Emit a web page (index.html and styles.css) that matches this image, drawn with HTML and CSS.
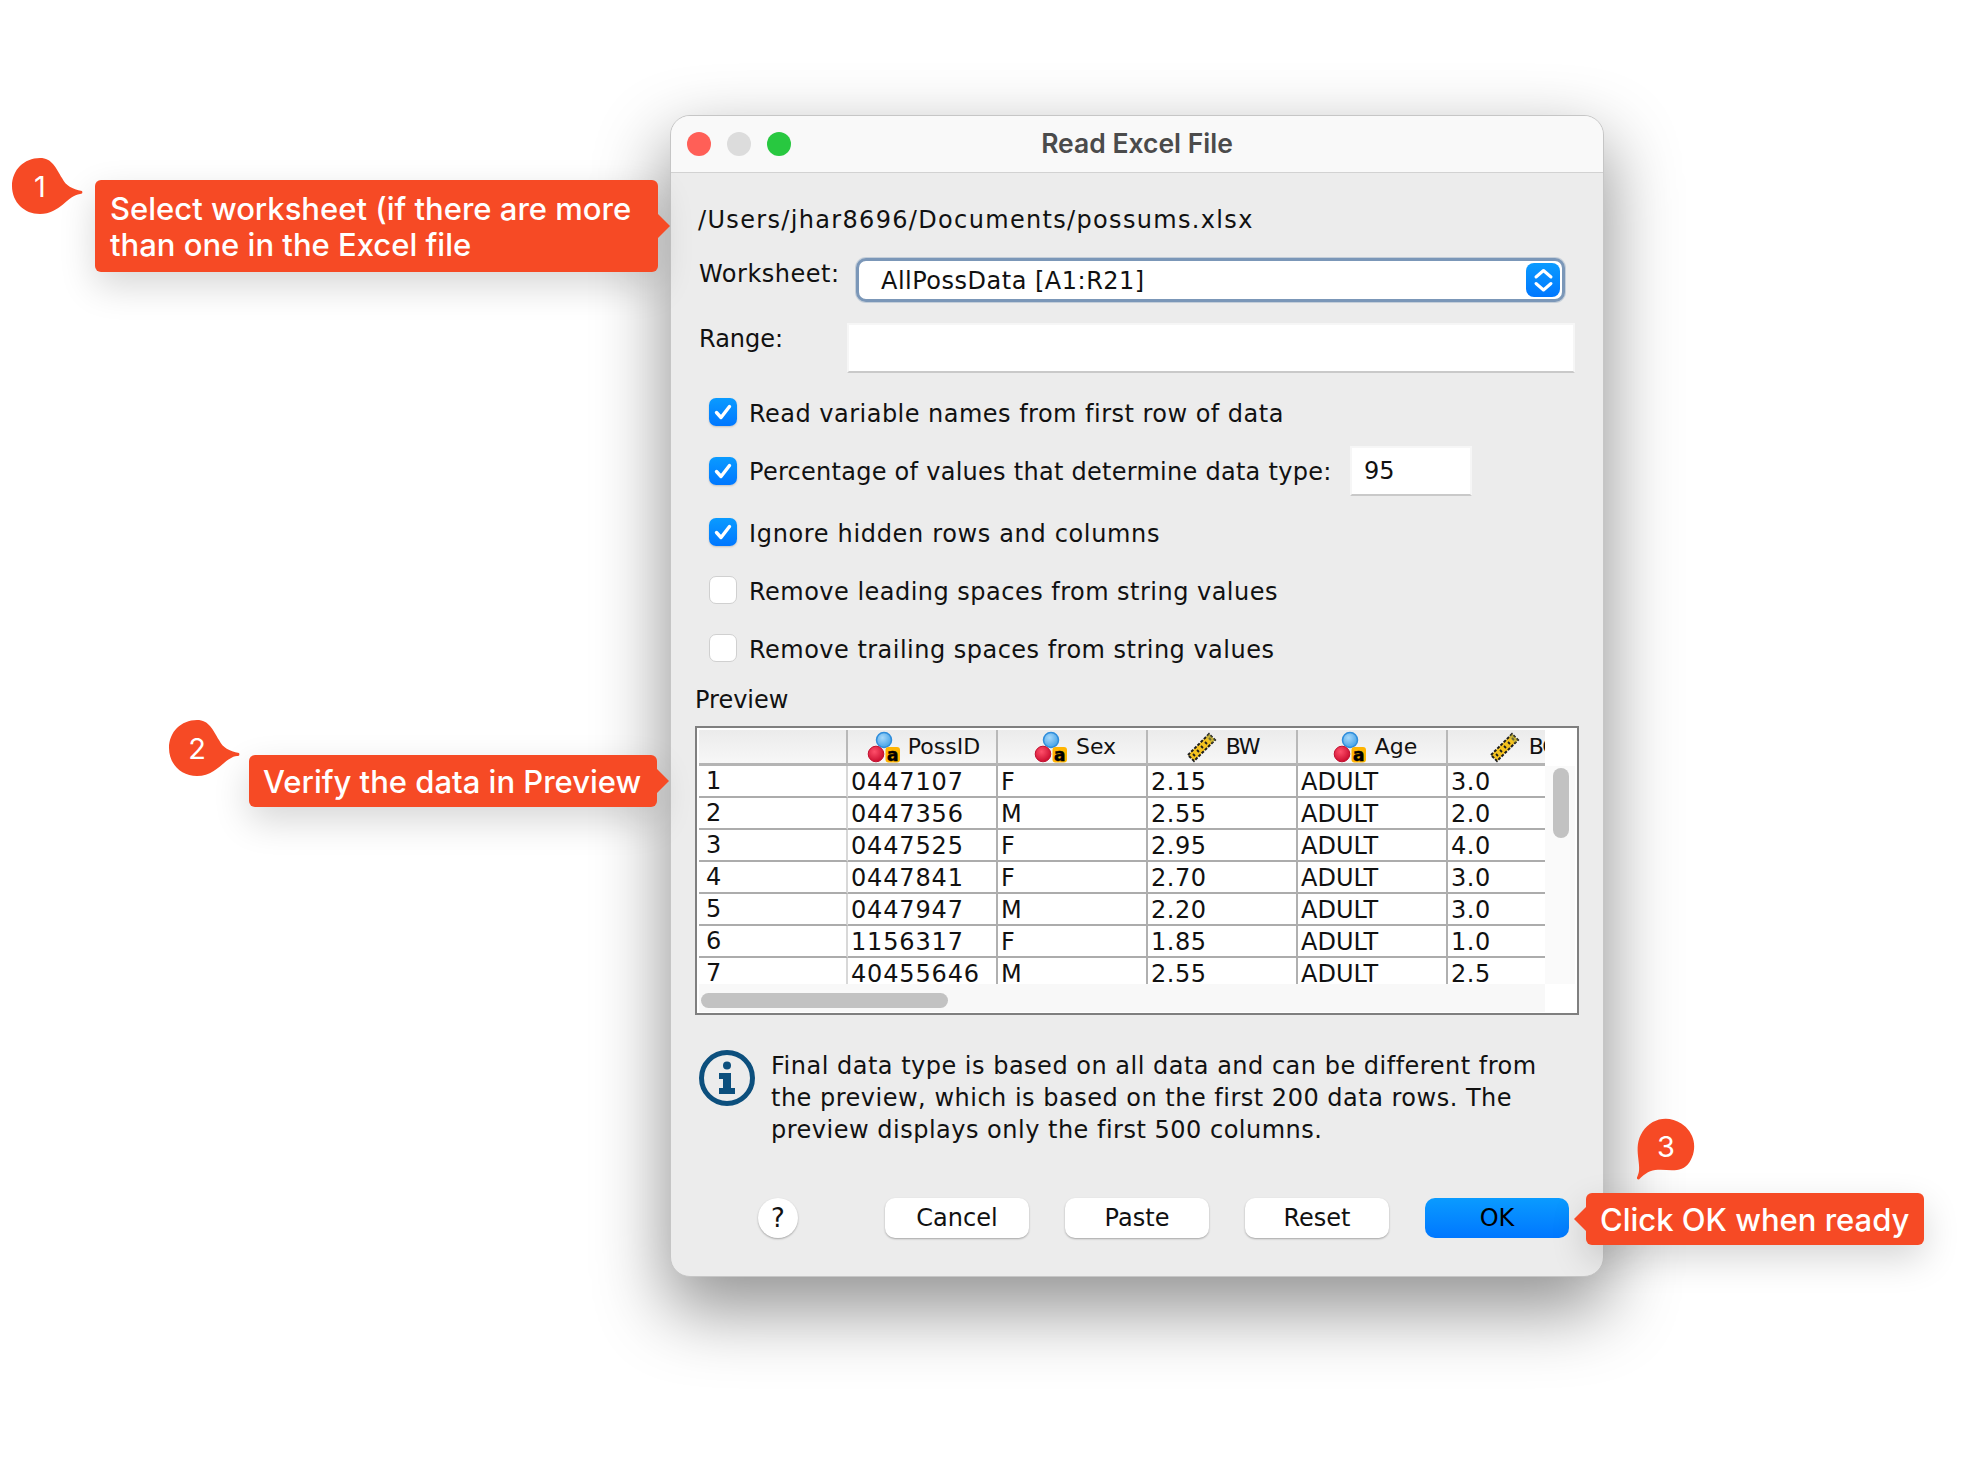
FILE: index.html
```html
<!DOCTYPE html>
<html lang="en">
<head>
<meta charset="utf-8">
<title>Read Excel File</title>
<link rel="stylesheet" href="styles.css">
</head>
<body>
<svg class="defs" width="0" height="0" aria-hidden="true">
  <defs>
    <radialGradient id="gBlue" cx="40%" cy="35%" r="70%"><stop offset="0" stop-color="#a6d8fa"/><stop offset="1" stop-color="#3f9fe6"/></radialGradient>
    <radialGradient id="gRed" cx="40%" cy="35%" r="70%"><stop offset="0" stop-color="#ff4f6a"/><stop offset="1" stop-color="#c80a2c"/></radialGradient>
    <symbol id="nominal" viewBox="0 0 40 36">
      <circle cx="23" cy="11" r="7.5" fill="url(#gBlue)" stroke="#2f8ddb" stroke-width="1.5"/>
      <circle cx="15" cy="25" r="7.8" fill="url(#gRed)" stroke="#c21030" stroke-width="1"/>
      <rect x="24.500" y="18" width="14.500" height="15.500" rx="3" fill="#ffb400"/>
      <text x="31.700" y="32" class="icon-a">a</text>
    </symbol>
    <symbol id="scale" viewBox="0 0 32 32">
      <path d="M3 24 24 3l6 6L9 30z" fill="#f4c21f" stroke="#1d1d1d" stroke-width="2" stroke-dasharray="3 1.500"/>
      <path d="M8 23l2 2M12 19l2 2M16 15l2 2M20 11l2 2M24 7l2 2" stroke="#1d1d1d" stroke-width="1.800" fill="none"/>
      <path d="M21 6l3-3 6 6-3 3z" fill="#a9a94a" opacity=".55"/>
    </symbol>
    <symbol id="tick" viewBox="0 0 28 28">
      <path d="M7.5 14.500l4.500 5 8.500-11" fill="none" stroke="#fff" stroke-width="3.400" stroke-linecap="round" stroke-linejoin="round"/>
    </symbol>
  </defs>
</svg>

<div class="stage">
  <section class="dialog">
    <header class="titlebar">
      <div class="lights"><span class="light light-red"></span><span class="light light-grey"></span><span class="light light-green"></span></div>
      <h1 class="title">Read Excel File</h1>
    </header>

    <div class="content">
      <div class="path">/Users/jhar8696/Documents/possums.xlsx</div>

      <div class="form-row sheet-row">
        <label class="form-label sheet-label">Worksheet:</label>
        <div class="combo">
          <span class="combo-text">AllPossData [A1:R21]</span>
          <span class="stepper">
            <svg width="34" height="34" viewBox="0 0 34 34"><path d="M10 14 17.500 7.500 25 14M10 20.500 17.500 27 25 20.500" fill="none" stroke="#fff" stroke-width="3" stroke-linecap="round" stroke-linejoin="round"/></svg>
          </span>
        </div>
      </div>

      <div class="form-row range-row">
        <label class="form-label range-label">Range:</label>
        <div class="field range-field"></div>
      </div>

      <div class="checks">
        <div class="check-row c1"><span class="box on"><svg width="28" height="28"><use href="#tick"/></svg></span><span class="check-text">Read variable names from first row of data</span></div>
        <div class="check-row c2"><span class="box on"><svg width="28" height="28"><use href="#tick"/></svg></span><span class="check-text pct-text">Percentage of values that determine data type:</span><div class="field pct-field">95</div></div>
        <div class="check-row c3"><span class="box on"><svg width="28" height="28"><use href="#tick"/></svg></span><span class="check-text ignore-text">Ignore hidden rows and columns</span></div>
        <div class="check-row c4"><span class="box"></span><span class="check-text">Remove leading spaces from string values</span></div>
        <div class="check-row c5"><span class="box"></span><span class="check-text">Remove trailing spaces from string values</span></div>
      </div>

      <div class="preview-label">Preview</div>
      <div class="frame">
        <div class="grid-pane">
          <table class="data">
            <colgroup><col class="col-first"><col class="col-n"><col class="col-n"><col class="col-n"><col class="col-n"><col class="col-n"></colgroup>
            <thead>
              <tr>
                <th></th>
                <th><span class="th-in th-id"><svg class="th-nom"><use href="#nominal"/></svg>PossID</span></th>
                <th><span class="th-in"><svg class="th-nom"><use href="#nominal"/></svg>Sex</span></th>
                <th><span class="th-in th-num"><svg class="th-sca"><use href="#scale"/></svg>BW</span></th>
                <th><span class="th-in"><svg class="th-nom"><use href="#nominal"/></svg>Age</span></th>
                <th><span class="th-in th-num"><svg class="th-sca"><use href="#scale"/></svg>BC</span></th>
              </tr>
            </thead>
            <tbody>
              <tr><td class="rn">1</td><td class="id">0447107</td><td>F</td><td class="num">2.15</td><td>ADULT</td><td class="num">3.0</td></tr>
              <tr><td class="rn">2</td><td class="id">0447356</td><td>M</td><td class="num">2.55</td><td>ADULT</td><td class="num">2.0</td></tr>
              <tr><td class="rn">3</td><td class="id">0447525</td><td>F</td><td class="num">2.95</td><td>ADULT</td><td class="num">4.0</td></tr>
              <tr><td class="rn">4</td><td class="id">0447841</td><td>F</td><td class="num">2.70</td><td>ADULT</td><td class="num">3.0</td></tr>
              <tr><td class="rn">5</td><td class="id">0447947</td><td>M</td><td class="num">2.20</td><td>ADULT</td><td class="num">3.0</td></tr>
              <tr><td class="rn">6</td><td class="id">1156317</td><td>F</td><td class="num">1.85</td><td>ADULT</td><td class="num">1.0</td></tr>
              <tr><td class="rn">7</td><td class="id">40455646</td><td>M</td><td class="num">2.55</td><td>ADULT</td><td class="num">2.5</td></tr>
            </tbody>
          </table>
        </div>
        <div class="vbar"><div class="vtrack"><div class="vthumb"></div></div></div>
        <div class="hbar"><div class="hthumb"></div></div>
        <div class="corner"></div>
      </div>

      <div class="info">
        <svg class="info-icon" width="56" height="56" viewBox="0 0 56 56">
          <circle cx="28" cy="28" r="25.500" fill="none" stroke="#0c4f7d" stroke-width="5"/>
          <circle cx="28" cy="15.500" r="4" fill="#0c4f7d"/>
          <path d="M20 23h12v15h4v6H20v-6h4v-9h-4z" fill="#0c4f7d"/>
        </svg>
        <p class="info-text">Final data type is based on all data and can be different from<br>the preview, which is based on the first 200 data rows. The<br>preview displays only the first 500 columns.</p>
      </div>

      <footer class="actions">
        <button class="help">?</button>
        <button class="btn">Cancel</button>
        <button class="btn">Paste</button>
        <button class="btn">Reset</button>
        <button class="btn btn-ok">OK</button>
      </footer>
    </div>
  </section>

  <div class="callout callout-1">Select worksheet (if there are more<br>than one in the Excel file</div>
  <div class="callout callout-2">Verify the data in Preview</div>
  <div class="callout callout-3">Click OK when ready</div>

  <svg class="bubble bubble-1" width="56" height="56" viewBox="0 0 56 56"><path class="bubble-shape" d="M28 0C40 0 44 10 50 20 54 28 60 31 70 33 71 35 70 36 68 36 56 37 48 56 28 56 12 56 0 44 0 28 0 12 12 0 28 0Z"/><text x="28" y="39" class="bubble-num">1</text></svg>
  <svg class="bubble bubble-2" width="56" height="56" viewBox="0 0 56 56"><path class="bubble-shape" d="M28 0C40 0 44 10 50 20 54 28 60 31 70 33 71 35 70 36 68 36 56 37 48 56 28 56 12 56 0 44 0 28 0 12 12 0 28 0Z"/><text x="28" y="39" class="bubble-num">2</text></svg>
  <svg class="bubble bubble-3" width="56" height="56" viewBox="0 0 56 56"><path class="bubble-shape" d="M28 0C40 0 44 10 50 20 54 28 60 31 70 33 71 35 70 36 68 36 56 37 48 56 28 56 12 56 0 44 0 28 0 12 12 0 28 0Z" transform="rotate(123 28 28)"/><text x="28" y="38" class="bubble-num">3</text></svg>
</div>
</body>
</html>
```
FILE: styles.css
```css
* { box-sizing: border-box; }
html, body { margin: 0; background: #fff; }
.defs { position: absolute; }
.stage {
  position: relative;
  width: 1964px;
  height: 1464px;
  overflow: hidden;
  padding: 115px 0 0 670px;
  font-family: "DejaVu Sans", sans-serif;
  font-size: 24px;
  color: #111;
}

/* dialog */
.dialog {
  width: 934px;
  height: 1162px;
  background: #ececec;
  border: 1px solid #c6c6c6;
  border-radius: 20px;
  box-shadow: 0 30px 70px 4px rgba(0,0,0,.42);
}
.titlebar {
  height: 57px;
  display: grid;
  grid-template-columns: 1fr auto 1fr;
  align-items: center;
  padding-left: 16px;
  background: #f9f9f9;
  border-bottom: 1px solid #d2d2d2;
  border-radius: 19px 19px 0 0;
}
.lights { display: flex; gap: 16px; }
.light { width: 24px; height: 24px; border-radius: 50%; }
.light-red { background: #ff5f57; }
.light-grey { background: #dcdcdc; }
.light-green { background: #28c840; }
.title {
  margin: -2px 0 0 -16px;
  font: 600 26.5px/32px Inter, sans-serif;
  color: #4b4b4b;
}
.content { padding: 31px 0 0 27px; }
.path { line-height: 32px; height: 32px; letter-spacing: 1.33px; }

/* form */
.form-row { display: flex; padding-left: 1px; }
.form-label { line-height: 32px; }
.sheet-row { margin-top: 22px; }
.sheet-label { width: 157px; letter-spacing: .5px; }
.combo {
  width: 709px;
  height: 44px;
  display: flex;
  align-items: center;
  justify-content: space-between;
  padding: 0 2px 0 22px;
  background: #fff;
  border: 3px solid #7b97b8;
  border-radius: 10px;
  box-shadow: 0 0 0 1px rgba(123,151,184,.35);
}
.combo-text { line-height: 32px; padding-top: 2px; letter-spacing: .5px; }
.stepper {
  width: 34px;
  height: 34px;
  border-radius: 8px;
  background: linear-gradient(#0a9bff, #0077ff);
}
.stepper svg { display: block; }
.range-row { margin-top: 21px; }
.range-label { width: 148px; }
.field {
  background: #fff;
  border: 2px solid #f6f6f6;
  border-bottom-color: #c9c9c9;
}
.range-field { width: 728px; height: 50px; }

/* checks */
.checks { margin: 25px 0 0 11px; }
.check-row { display: flex; align-items: center; }
.c2 { margin-top: 20px; }
.c3 { margin-top: 22px; }
.c4, .c5 { margin-top: 30px; }
.box {
  width: 28px;
  height: 28px;
  flex: none;
  margin-right: 12px;
  border-radius: 7px;
  background: #fff;
  border: 1px solid #d0d0d0;
}
.box svg { display: block; }
.box.on {
  border: 0;
  background: linear-gradient(#0a9bff, #0077ff);
  box-shadow: 0 1px 2px rgba(0,0,0,.18);
}
.check-text { line-height: 24px; padding-top: 4px; letter-spacing: .48px; }
.pct-text { width: 601px; padding-top: 2px; white-space: nowrap; letter-spacing: .27px; }
.ignore-text { letter-spacing: .66px; }
.pct-field { width: 122px; height: 50px; padding-left: 12px; line-height: 46px; }

/* preview */
.preview-label { margin-top: 22px; line-height: 32px; height: 32px; margin-left: -3px; }
.frame {
  width: 884px;
  height: 289px;
  margin: 10px 0 0 -3px;
  padding: 2px;
  display: grid;
  grid-template-columns: 846px 30px;
  grid-template-rows: 254px 28px;
  background: #fff;
  border: 2px solid #7f7f7f;
}
.grid-pane { overflow: hidden; }
.data {
  table-layout: fixed;
  width: 899px;
  border-collapse: separate;
  border-spacing: 0;
}
.col-first { width: 149px; }
.col-n { width: 150px; }
.data th {
  height: 36px;
  padding: 0;
  font-weight: 400;
  font-size: 22px;
  background: linear-gradient(#ebebeb, #f7f7f7);
  border-right: 2px solid #b8b8b8;
  border-bottom: 3px solid #b4b4b4;
  overflow: hidden;
  text-align: left;
}
.th-in { display: flex; align-items: center; justify-content: center; height: 33px; white-space: nowrap; }
.th-id { padding-right: 3px; }
.th-id .th-nom { margin-right: 7px; }
.th-num { letter-spacing: -1.4px; }
.th-nom { width: 40px; height: 36px; flex: none; margin-right: 8px; }
.th-sca { width: 32px; height: 32px; flex: none; margin-right: 9px; }
.icon-a { font: 700 17px "DejaVu Sans", sans-serif; fill: #000; stroke: #000; stroke-width: .5px; text-anchor: middle; }
.data td {
  height: 32px;
  padding: 2px 0 0 3px;
  line-height: 28px;
  background: #fff;
  border-right: 2px solid #b0b0b0;
  border-bottom: 2px solid #acacac;
  white-space: nowrap;
  overflow: hidden;
}
.data td.id { letter-spacing: .85px; }
.data td.num { letter-spacing: .5px; }
.data td.rn { padding: 0 0 0 7px; line-height: 26px; border-right-color: #d8d8d8; }
.vbar { padding-top: 36px; }
.vtrack { height: 218px; padding: 2px 6px 0 8px; background: #fafafa; }
.vthumb { width: 16px; height: 70px; border-radius: 8px; background: #c2c2c2; }
.hbar { padding: 9px 0 0 2px; background: #f8f8f8; }
.hthumb { width: 247px; height: 15px; border-radius: 8px; background: #c2c2c2; }
.corner { background: #fff; }

/* info */
.info { display: flex; margin: 35px 0 0 1px; }
.info-icon { flex: none; margin-right: 16px; }
.info-text { margin: 0; line-height: 32px; white-space: nowrap; letter-spacing: .5px; }

/* buttons */
.actions { display: flex; gap: 36px; margin: 52px 0 0 60px; }
.btn, .help {
  padding: 0;
  border: 0;
  height: 40px;
  font: 400 24px/40px "DejaVu Sans", sans-serif;
  color: #111;
  background: #fff;
  box-shadow: 0 1px 2px rgba(0,0,0,.3);
}
.btn { width: 144px; border-radius: 10px; }
.help { width: 40px; border-radius: 50%; margin-right: 51px; font-size: 26px; }
.btn-ok { background: linear-gradient(#0a9bff, #0077ff); color: #000; box-shadow: none; }

/* callouts */
.callout {
  position: absolute;
  background: #f64a25;
  color: #fff;
  font: 500 31px/36px Inter, sans-serif;
  border-radius: 6px;
  box-shadow: 0 14px 36px rgba(0,0,0,.16);
  white-space: nowrap;
}
.callout::after {
  content: "";
  position: absolute;
  top: 50%;
  margin-top: -12px;
  border: 12px solid transparent;
}
.callout-1 { left: 95px; top: 180px; width: 563px; height: 92px; padding: 11px 15px; }
.callout-2 { left: 249px; top: 755px; width: 408px; height: 52px; padding: 9px 14px; }
.callout-3 { left: 1586px; top: 1193px; width: 338px; height: 52px; padding: 9px 14px; }
.callout-1::after, .callout-2::after { left: 100%; border-left-color: #f64a25; border-right-width: 0; }
.callout-3::after { right: 100%; border-right-color: #f64a25; border-left-width: 0; }

.bubble { position: absolute; overflow: visible; }
.bubble-1 { left: 12px; top: 158px; }
.bubble-2 { left: 169px; top: 720px; }
.bubble-3 { left: 1638px; top: 1119px; }
.bubble-shape { fill: #f64a25; }
.bubble-num { font: 400 29px Inter, sans-serif; fill: #fff; text-anchor: middle; }
```
